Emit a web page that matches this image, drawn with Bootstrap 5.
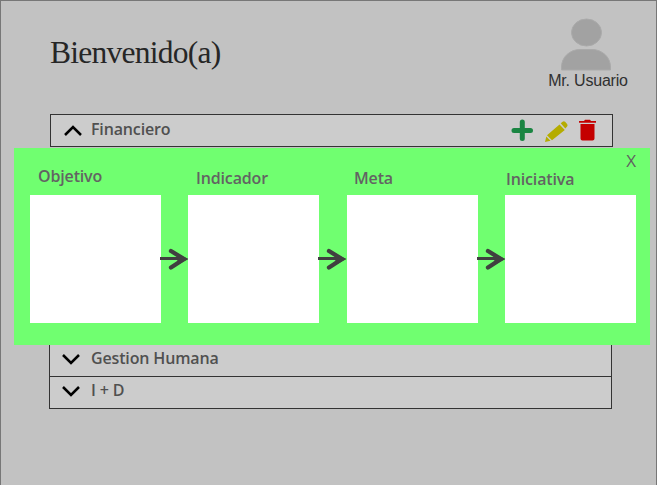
<!DOCTYPE html>
<html lang="es">
<head>
<meta charset="utf-8">
<meta name="viewport" content="width=device-width, initial-scale=1">
<title>Bienvenido(a)</title>
<link href="https://cdn.jsdelivr.net/npm/bootstrap@5.3.0/dist/css/bootstrap.min.css" rel="stylesheet">
<style>
body{background:#c2c2c2;font-family:"Open Sans","Noto Sans",sans-serif;font-size:16px;font-weight:600;color:#505050;letter-spacing:-.15px}
.screen{width:657px;height:485px;border:1px solid #777;border-bottom:0}
.top-area{height:113px;padding:0 28px 0 49px}
.welcome{font:400 31.5px/36px "Liberation Serif",serif;color:#262626;margin:34px 0 0;letter-spacing:-.75px;white-space:nowrap}
.user{width:80px;margin-top:17px;font:400 16px/18px "Liberation Sans",Arial,sans-serif;color:#303030;white-space:nowrap;letter-spacing:-.2px}
.user svg{width:52px;height:54px;margin-right:4px}
.perspectives{width:563px;margin-left:49px}
.perspective{height:33px;background:#ccc;border:1px solid #333;padding:0 14px 0 12px}
.perspective .actions{margin-top:1px}
.spacer-area{height:197px}
.lower{margin-left:48px}
.lower .perspective{padding-left:11px}
.lower .perspective .title{margin-left:10px}
.lower .perspective+.perspective{border-top:0;height:32px}
.lower .perspective .title{margin-top:-2px}
.lower .perspective svg{margin-top:-3px}
.perspective .title{line-height:22px;margin-left:8px}
.map-panel{left:14px;top:148px;width:636px;height:197px;background:#70ff70;color:#636363}
.map-row{padding:0 14px 0 16px}
.step{width:131px}
.step-name{height:47px;line-height:22px;padding-left:8px;padding-top:17px;white-space:nowrap}
.step-low{padding-top:19px}
.step-meta{padding-left:7px}
.step-last{padding-top:20px;padding-left:1px}
.step-box{height:128px;background:#fff}
.arrow{width:27px;padding-top:97px}
.arrow-mid{width:28px}
.arrow svg{width:30px;height:26px;margin-left:-1px;overflow:visible}
.close-map{right:14px;top:3px;line-height:20px;font-weight:500;font-size:17px;color:#606060}
</style>
</head>
<body>
<main class="screen position-relative overflow-hidden">
<header class="top-area d-flex justify-content-between align-items-start">
<h1 class="welcome">Bienvenido(a)</h1>
<div class="user d-flex flex-column align-items-center">
<svg viewBox="0 0 52 54"><g fill="#a2a2a2" stroke="#aaa"><ellipse cx="26.500" cy="14.500" rx="15" ry="13.500"/><path d="M1.500 52V49C1.500 39 10 31.500 20 31.500H32C42 31.500 50.500 39 50.500 49V52Z"/></g></svg>
<span>Mr. Usuario</span>
</div>
</header>
<section class="perspectives">
<div class="perspective d-flex align-items-center">
<svg width="20" height="14" viewBox="0 0 20 14"><path d="M2 11 10 3l8 8" fill="none" stroke="#000" stroke-width="2.500"/></svg>
<span class="title flex-grow-1 pb-1">Financiero</span>
<svg class="actions" width="88" height="26" viewBox="0 0 88 26">
<path d="M4 12.500H20.500M12.300 4V20.500" stroke="#1a8542" stroke-width="5" stroke-linecap="round"/>
<g fill="#b5ac00"><path d="m35 24 1.300-5.600L40.500 22.800ZM37 17.300 49.500 6.500l5.300 5.500L42 22.300ZM50.700 5.300l1.900-1.500q1.200-1 2.500 0l2 2.200q1 1.200 0 2.500l-1.800 1.900Z"/></g>
<path fill="#c40000" d="M69 4.700V3h5L75 1.700h5L81 3h5V4.700ZM70.500 6H84.500V20.500q0 2-2 2h-10q-2 0-2-2Z"/>
</svg>
</div>
</section>
<div class="spacer-area"></div>
<section class="perspectives lower">
<div class="perspective d-flex align-items-center">
<svg width="20" height="14" viewBox="0 0 20 14"><path d="M2 3 10 11l8-8" fill="none" stroke="#000" stroke-width="2.500"/></svg>
<span class="title pb-1">Gestion Humana</span>
</div>
<div class="perspective d-flex align-items-center">
<svg width="20" height="14" viewBox="0 0 20 14"><path d="M2 3 10 11l8-8" fill="none" stroke="#000" stroke-width="2.500"/></svg>
<span class="title pb-1">I + D</span>
</div>
</section>
</main>
<section class="map-panel position-absolute">
<span class="close-map position-absolute">X</span>
<div class="map-row d-flex">
<div class="step"><div class="step-name">Objetivo</div><div class="step-box"></div></div>
<div class="arrow"><svg viewBox="0 0 30 26"><path d="M0 12.500H22" stroke="#404040" stroke-width="3"/><path d="M11 5 24 13 11 21.500" fill="none" stroke="#404040" stroke-width="4.300" stroke-linecap="round"/><path d="m15 7 13.500 6L15 20l3-7Z" fill="#404040"/></svg></div>
<div class="step"><div class="step-name step-low">Indicador</div><div class="step-box"></div></div>
<div class="arrow arrow-mid"><svg viewBox="0 0 30 26"><path d="M0 12.500H22" stroke="#404040" stroke-width="3"/><path d="M11 5 24 13 11 21.500" fill="none" stroke="#404040" stroke-width="4.300" stroke-linecap="round"/><path d="m15 7 13.500 6L15 20l3-7Z" fill="#404040"/></svg></div>
<div class="step"><div class="step-name step-low step-meta">Meta</div><div class="step-box"></div></div>
<div class="arrow"><svg viewBox="0 0 30 26"><path d="M0 12.500H22" stroke="#404040" stroke-width="3"/><path d="M11 5 24 13 11 21.500" fill="none" stroke="#404040" stroke-width="4.300" stroke-linecap="round"/><path d="m15 7 13.500 6L15 20l3-7Z" fill="#404040"/></svg></div>
<div class="step"><div class="step-name step-last">Iniciativa</div><div class="step-box"></div></div>
</div>
</section>
<script src="https://cdn.jsdelivr.net/npm/bootstrap@5.3.0/dist/js/bootstrap.bundle.min.js"></script>
</body>
</html>
